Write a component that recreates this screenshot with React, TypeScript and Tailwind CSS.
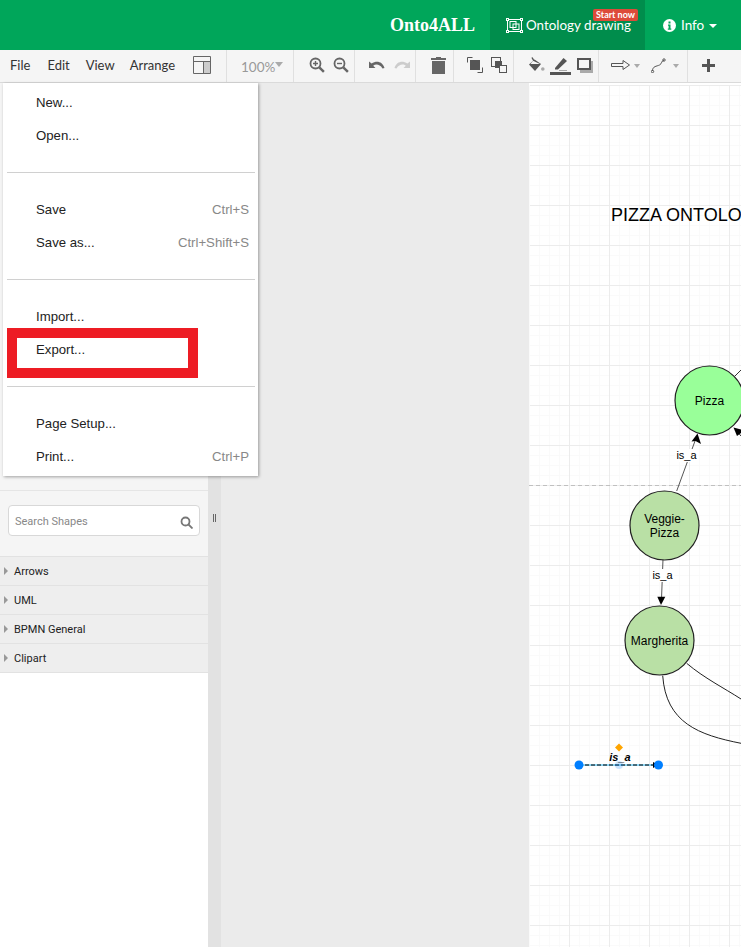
import { useMemo } from "react"

const menuFont = "font-['Liberation_Sans',Arial,sans-serif]"
const uiFont = "font-['Lato',sans-serif]"

function MenuItem({ label, shortcut }: { label: string; shortcut?: string }) {
  return (
    <div className="flex h-[33px] items-center justify-between pl-[33px] pr-[9px] text-[13.2px] text-[#222]">
      <span>{label}</span>
      {shortcut && <span className="text-[#888]">{shortcut}</span>}
    </div>
  )
}

function MenuDivider() {
  return <div className="ml-[4px] mr-[3px] mt-[20px] mb-[20px] h-px bg-[#d0d0d0]" />
}

function FileMenu() {
  return (
    <div className={`absolute left-[3px] top-[83px] z-20 h-[393px] w-[255px] bg-white pt-[3px] shadow-[1px_1px_3px_rgba(0,0,0,0.35)] ${menuFont}`}>
      <MenuItem label="New..." />
      <MenuItem label="Open..." />
      <MenuDivider />
      <MenuItem label="Save" shortcut="Ctrl+S" />
      <MenuItem label="Save as..." shortcut="Ctrl+Shift+S" />
      <MenuDivider />
      <MenuItem label="Import..." />
      <MenuItem label="Export..." />
      <MenuDivider />
      <MenuItem label="Page Setup..." />
      <MenuItem label="Print..." shortcut="Ctrl+P" />
      {/* red annotation box */}
      <div className="absolute left-[4px] top-[245px] h-[50px] w-[191px] border-[10px] border-[#ed1c24]" />
    </div>
  )
}

function Sep() {
  return <div className="h-full w-px bg-[#e0e0e0]" />
}

function Caret() {
  return <span className="h-0 w-0 border-x-[3.5px] border-t-[4px] border-x-transparent border-t-[#aaa]" />
}

function Toolbar() {
  return (
    <div className={`flex h-[33px] items-center border-b border-[#dadada] bg-[#f5f5f5] text-[#333] ${uiFont}`}>
      <div className="flex h-full w-[226px] items-center text-[13px]">
        <span className="ml-[10px]">File</span>
        <span className="ml-[17px]">Edit</span>
        <span className="ml-[16px]">View</span>
        <span className="ml-[15px]">Arrange</span>
        <svg className="ml-[18px] -mt-[3px]" width="18" height="18" viewBox="0 0 18 18">
          <rect x="11" y="5.5" width="6" height="12" fill="#ccc" />
          <path d="M.5.5h17v17H.5zM.5 5.5h17M10.5 5.5v12" fill="none" stroke="#666" />
        </svg>
      </div>
      <Sep />
      <div className="flex h-full w-[66px] items-center pl-[14px] pt-[2px] text-[13.5px] text-[#999]">
        100%
        <span className="mt-[-6px] h-0 w-0 border-x-[4px] border-t-[5px] border-x-transparent border-t-[#aaa]" />
      </div>
      <Sep />
      <div className="flex h-full w-[60px] items-center gap-[8px] pl-[15px]">
        <svg className="-mt-[2px]" width="16" height="16" viewBox="0 0 16 16" fill="none" stroke="#666" strokeWidth="1.8">
          <circle cx="6.5" cy="6.5" r="5" />
          <path d="M10.3 10.3l4.6 4.6" strokeWidth="2.4" />
          <path d="M4 6.5h5M6.5 4v5" strokeWidth="1.4" />
        </svg>
        <svg className="-mt-[2px]" width="16" height="16" viewBox="0 0 16 16" fill="none" stroke="#666" strokeWidth="1.8">
          <circle cx="6.5" cy="6.5" r="5" />
          <path d="M10.3 10.3l4.6 4.6" strokeWidth="2.4" />
          <path d="M4 6.5h5" strokeWidth="1.4" />
        </svg>
      </div>
      <Sep />
      <div className="flex h-full w-[60px] items-center gap-[9px] pl-[14px]">
        <svg className="-mt-[2px]" width="16" height="11" viewBox="0 0 16 11" fill="#666">
          <path d="M0 1.500L0 8h6.500L4.200 5.800C6.500 4 10.500 3.800 13.500 8.500L15.500 8C13.500 1.500 7.500 .2 2.600 3.600z" />
        </svg>
        <svg className="-mt-[2px]" width="16" height="11" viewBox="0 0 16 11" fill="#ccc">
          <path d="M16 1.500V8H9.500l2.300-2.200C9.500 4 5.500 3.800 2.500 8.500L.5 8C2.500 1.500 8.500.2 13.400 3.600z" />
        </svg>
      </div>
      <Sep />
      <div className="flex h-full w-[37px] items-center pl-[15px]">
        <svg className="-mt-[2px]" width="15" height="17" viewBox="0 0 15 17" fill="#666">
          <path d="M0 1h5V0h5v1h5v2H0zM1 4h13v13H1z" />
        </svg>
      </div>
      <Sep />
      <div className="flex h-full w-[59px] items-center gap-[8px] pl-[13px]">
        <svg className="-mt-[2px]" width="16" height="16" viewBox="0 0 16 16" fill="none" stroke="#555">
          <path d="M10.500 15.500H15.500V10.500M.5 5.500V.5h5" />
          <rect x="3" y="3" width="10" height="10" fill="#555" stroke="none" />
        </svg>
        <svg className="-mt-[2px]" width="16" height="16" viewBox="0 0 16 16" fill="none" stroke="#555">
          <rect x=".5" y=".5" width="9" height="9" />
          <rect x="4" y="4" width="7" height="7" fill="#555" stroke="none" />
          <rect x="8.500" y="8.500" width="7" height="7" fill="#f5f5f5" />
        </svg>
      </div>
      <Sep />
      <div className="flex h-full w-[84px] items-center gap-[5px] pl-[14px]">
        <svg className="-mt-[3px]" width="17" height="17" viewBox="0 0 17 17">
          <path d="M4 1.500L6 5" fill="none" stroke="#555" strokeWidth="1.500" />
          <path d="M1 8.500L6.500 3.500 13 8 7 15z" fill="#555" />
          <path d="M5 4.800L12 8H2.500z" fill="#f5f5f5" />
          <circle cx="14.800" cy="13" r="1.800" fill="#aaa" />
        </svg>
        <svg className="-mt-[1px]" width="21" height="19" viewBox="0 0 21 19">
          <path d="M5 12L13.500 2l3.500 3L8 13.500H5z" fill="#555" />
          <path d="M9 14h8v1H9z" fill="#aaa" />
          <path d="M0 16h21v3H0z" fill="#555" />
        </svg>
        <svg className="ml-[1px] -mt-[1px]" width="16" height="15" viewBox="0 0 16 15">
          <rect x="3" y="3" width="13" height="12" fill="#aaa" />
          <rect x="1" y="1" width="12" height="10" fill="#f5f5f5" stroke="#555" strokeWidth="2" />
        </svg>
      </div>
      <Sep />
      <div className="flex h-full w-[88px] items-center pl-[12px]">
        <svg className="-mt-[2px] mr-[4px]" width="19" height="10" viewBox="0 0 19 10" fill="none" stroke="#555">
          <path d="M.5 3.500h11.500v-3l6.500 4.500-6.500 4.500v-3H.5z" />
        </svg>
        <Caret />
        <svg className="ml-[11px] mr-[7px] -mt-[2px]" width="15" height="15" viewBox="0 0 15 15" fill="none" stroke="#555">
          <path d="M1.500 13c0-5 4-4.500 7-6s1.500-4.500 4.500-4.500" />
          <circle cx="13" cy="2" r="1.200" />
          <circle cx="1.500" cy="13.500" r="1.200" />
        </svg>
        <Caret />
      </div>
      <Sep />
      <div className="flex h-full items-center pl-[14px]">
        <svg className="-mt-[2px]" width="13" height="13" viewBox="0 0 13 13" fill="#555">
          <path d="M5 0h3v5h5v3H8v5H5V8H0V5h5z" />
        </svg>
      </div>
    </div>
  )
}

function ShapeGroup({ label }: { label: string }) {
  return (
    <div className="flex h-[29px] items-center border-b border-[#e2e2e2] bg-[#eeeeee] pl-[4px] text-[11px] text-[#222]">
      <span className="mr-[6px] h-0 w-0 border-y-[4px] border-l-[4px] border-y-transparent border-l-[#999]" />
      <span className="pt-[2px]">{label}</span>
    </div>
  )
}

function Sidebar() {
  return (
    <div className="flex w-[208px] shrink-0 flex-col bg-white font-['Roboto',sans-serif]">
      <div className="h-[408px] border-b border-[#e5e5e5] bg-[#f5f5f5]" />
      <div className="h-[66px] border-b border-[#e2e2e2] bg-[#f5f5f5] px-[8px] pt-[14px]">
        <div className="flex h-[31px] w-full items-center justify-between rounded-[4px] border border-[#d8d8d8] bg-white px-[6px] text-[11px] text-[#888]">
          <span className="pt-[3px]">Search Shapes</span>
          <svg className="mt-[3px]" width="13" height="13" viewBox="0 0 13 13" fill="none" stroke="#777" strokeWidth="1.8">
            <circle cx="5.500" cy="5.500" r="4" />
            <path d="M8.500 8.500l4 4" />
          </svg>
        </div>
      </div>
      <ShapeGroup label="Arrows" />
      <ShapeGroup label="UML" />
      <ShapeGroup label="BPMN General" />
      <ShapeGroup label="Clipart" />
    </div>
  )
}

function Diagram() {
  const { minorX, minorY, majorX, majorY } = useMemo(() => ({
    minorX: Array.from({ length: 22 }, (_, i) => 0.5 + i * 10),
    minorY: Array.from({ length: 87 }, (_, i) => 2.5 + i * 10),
    majorX: Array.from({ length: 5 }, (_, i) => 40.5 + i * 40),
    majorY: Array.from({ length: 22 }, (_, i) => 2.5 + i * 40),
  }), [])
  return (
    <svg className="block" width="212" height="864" viewBox="0 0 212 864" fontFamily="'Liberation Sans', Arial, sans-serif">
      {minorX.map((x) => (
        <path key={x} d={`M${x} 2V864`} stroke="#fafafa" />
      ))}
      {minorY.map((y) => (
        <path key={y} d={`M0 ${y}H212`} stroke="#fafafa" />
      ))}
      {majorX.map((x) => (
        <path key={x} d={`M${x} 2V864`} stroke="#ececec" />
      ))}
      {majorY.map((y) => (
        <path key={y} d={`M1 ${y}H212`} stroke="#ececec" />
      ))}
      <path d="M0 402.500H212" stroke="#c0c0c0" strokeDasharray="4 3" />

      <text x="82" y="138" fontSize="18" fill="#000">PIZZA ONTOLOGY</text>

      {/* edges */}
      <path d="M147.700 408L166 358" stroke="#555" />
      <path d="M168.500 350.500L162.500 358.500 166.500 358 172 361z" fill="#000" />
      <path d="M134 476L132.500 516" stroke="#555" />
      <path d="M128.300 513.700h8L132 522z" fill="#000" />
      <path d="M206 293L212 287" stroke="#333" />
      <path d="M209.500 350L212 353" stroke="#333" />
      <path d="M157.700 580.300C175 595 195 605 212 616" fill="none" stroke="#222" />
      <path d="M133.700 592.700C137 640 170 652 212 660.300" fill="none" stroke="#222" />

      {/* nodes */}
      <circle cx="180.500" cy="317.500" r="34.500" fill="#99ff99" stroke="#222" strokeWidth="1.200" />
      <text x="180.500" y="322" fontSize="12" textAnchor="middle">Pizza</text>
      <path d="M204.500 344.500L212 346.500V350L208 353z" fill="#000" />
      <circle cx="135.500" cy="442.500" r="34.500" fill="#b9e0a5" stroke="#222" strokeWidth="1.200" />
      <text x="135.500" y="440" fontSize="12" textAnchor="middle">Veggie-</text>
      <text x="135.500" y="454" fontSize="12" textAnchor="middle">Pizza</text>
      <circle cx="130.500" cy="557.500" r="34.500" fill="#b9e0a5" stroke="#222" strokeWidth="1.200" />
      <text x="130.500" y="562" fontSize="12" textAnchor="middle">Margherita</text>

      {/* edge labels */}
      <rect x="146" y="366" width="23" height="13" fill="#fff" />
      <text x="157.500" y="376" fontSize="11" textAnchor="middle">is_a</text>
      <rect x="122" y="486" width="23" height="13" fill="#fff" />
      <text x="133.500" y="496" fontSize="11" textAnchor="middle">is_a</text>

      {/* selected edge */}
      <path d="M50 682H129" stroke="#29b6f2" />
      <path d="M50 682H129" stroke="#000" strokeDasharray="4 2" />
      <path d="M124 679v6l5.500-3z" fill="#000" />
      <circle cx="50" cy="682" r="4.500" fill="#007fff" />
      <circle cx="129.500" cy="682" r="4.500" fill="#007fff" />
      <circle cx="90" cy="682" r="4" fill="#007fff" opacity="0.2" />
      <path d="M90 660.500l4 4-4 4-4-4z" fill="#ffa500" />
      <text x="91" y="678" fontSize="11" fontStyle="italic" fontWeight="bold" textAnchor="middle">is_a</text>
    </svg>
  )
}

export default function App() {
  return (
    <div className="relative h-[947px] w-[741px] overflow-hidden bg-[#ebebeb]">
      <header className={`flex h-[50px] items-center justify-end bg-[#00a65a] text-white ${uiFont}`}>
        <span className="mr-[15px] font-['Liberation_Serif',serif] text-[18px] font-bold">Onto4ALL</span>
        <div className="relative flex h-full w-[155px] items-center bg-[#008d4c] pl-[16px] text-[13.4px]">
          <svg className="mr-[3px]" width="17" height="15" viewBox="0 0 17 15" fill="none" stroke="#fff">
            <rect x="1.500" y="1.500" width="14" height="12" />
            <rect x="4" y="3.500" width="6" height="6" />
            <rect x="7" y="6" width="6" height="5.500" />
            <g fill="#008d4c">
              <rect x=".5" y=".5" width="2" height="2" />
              <rect x="14.500" y=".5" width="2" height="2" />
              <rect x=".5" y="12.500" width="2" height="2" />
              <rect x="14.500" y="12.500" width="2" height="2" />
            </g>
          </svg>
          Ontology drawing
          <span className="absolute right-[7px] top-[9px] rounded-[2px] bg-[#dd4b39] px-[3px] text-[9px] font-bold leading-[12px]">Start now</span>
        </div>
        <div className="flex w-[96px] items-center pl-[18px] text-[13.5px]">
          <svg className="mr-[5px]" width="13" height="13" viewBox="0 0 13 13">
            <circle cx="6.500" cy="6.500" r="6.500" fill="#fff" />
            <path d="M5.500 2.500h2v2h-2zM5 5.500h2.500V9.500h.8v1.200H4.800V9.500h.8V6.700H5z" fill="#00a65a" />
          </svg>
          Info
          <span className="ml-[5px] mt-[2px] h-0 w-0 border-x-[4px] border-t-[4px] border-x-transparent border-t-white" />
        </div>
      </header>
      <Toolbar />
      <div className="flex h-[864px]">
        <Sidebar />
        <div className="relative flex w-[13px] shrink-0 justify-center bg-[#e2e2e2] pt-[431px]">
          <span className="h-[8px] w-[3px] border-x border-[#666]" />
        </div>
        <div className="flex-1 pl-[308px]">
          <div className="h-full w-[212px] bg-white">
            <Diagram />
          </div>
        </div>
      </div>
      <FileMenu />
    </div>
  )
}
